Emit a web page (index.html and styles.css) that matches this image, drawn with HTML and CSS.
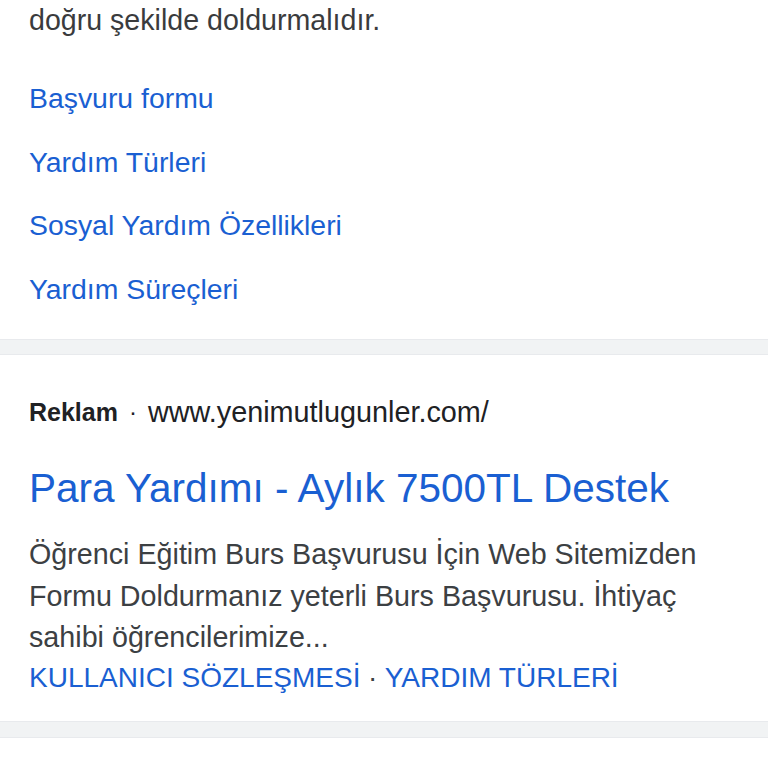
FILE: index.html
```html
<!DOCTYPE html>
<html lang="tr">
<head>
<meta charset="utf-8">
<link rel="stylesheet" href="styles.css">
</head>
<body>
<section class="card card-top">
  <p class="snippet">doğru şekilde doldurmalıdır.</p>
  <ul class="links">
    <li><a href="#">Başvuru formu</a></li>
    <li><a href="#">Yardım Türleri</a></li>
    <li><a href="#">Sosyal Yardım Özellikleri</a></li>
    <li><a href="#">Yardım Süreçleri</a></li>
  </ul>
</section>
<div class="band"></div>
<section class="card card-ad">
  <div class="ad-head"><span class="ad-label">Reklam</span><span class="dot">·</span><span class="ad-url">www.yenimutlugunler.com/</span></div>
  <h2 class="ad-title"><a href="#">Para Yardımı - Aylık 7500TL Destek</a></h2>
  <p class="ad-desc">Öğrenci Eğitim Burs Başvurusu İçin Web Sitemizden Formu Doldurmanız yeterli Burs Başvurusu. İhtiyaç sahibi öğrencilerimize...</p>
  <div class="sitelinks"><a href="#">KULLANICI SÖZLEŞMESİ</a><span class="sdot">·</span><a href="#">YARDIM TÜRLERİ</a></div>
</section>
<div class="band band-2"></div>
<section class="card card-empty"></section>
</body>
</html>
```
FILE: styles.css
```css
html, body {
  margin: 0;
  padding: 0;
  background: #ffffff;
  font-family: "Liberation Sans", Arial, sans-serif;
  color: #3c4043;
}
a { color: #1a5fd2; text-decoration: none; }
.card { padding: 0 29px; }
.card-top { padding-bottom: 18px; }
.snippet {
  margin: 0;
  font-size: 28.6px;
  line-height: 40px;
  color: #3a3b3d;
}
.links {
  list-style: none;
  margin: 27px 0 0;
  padding: 0;
}
.links li {
  height: 63.5px;
  display: flex;
  align-items: center;
  font-size: 28.4px;
}
.band {
  height: 14px;
  background: #f1f3f4;
  border-top: 1px solid #e8eaed;
  border-bottom: 1px solid #e8eaed;
}
.band-2 { height: 15px; margin-top: 1px; }
.card-ad { padding-top: 40px; padding-bottom: 23px; }
.ad-head {
  display: flex;
  align-items: center;
  height: 34px;
  color: #202124;
}
.ad-label { font-weight: bold; font-size: 25px; }
.dot { margin: 0 11px; font-size: 24px; }
.ad-url { font-size: 28.8px; }
.ad-title {
  margin: 35px 0 0;
  font-weight: normal;
  font-size: 40.5px;
  line-height: 48px;
}
.ad-desc {
  margin: 22px 0 0;
  font-size: 28.7px;
  line-height: 41.5px;
  color: #3c4043;
}
.sitelinks {
  font-size: 28px;
  line-height: 38px;
  color: #3c4043;
}
.sdot { margin: 0 7.5px; }
.card-empty { height: 40px; }
```
